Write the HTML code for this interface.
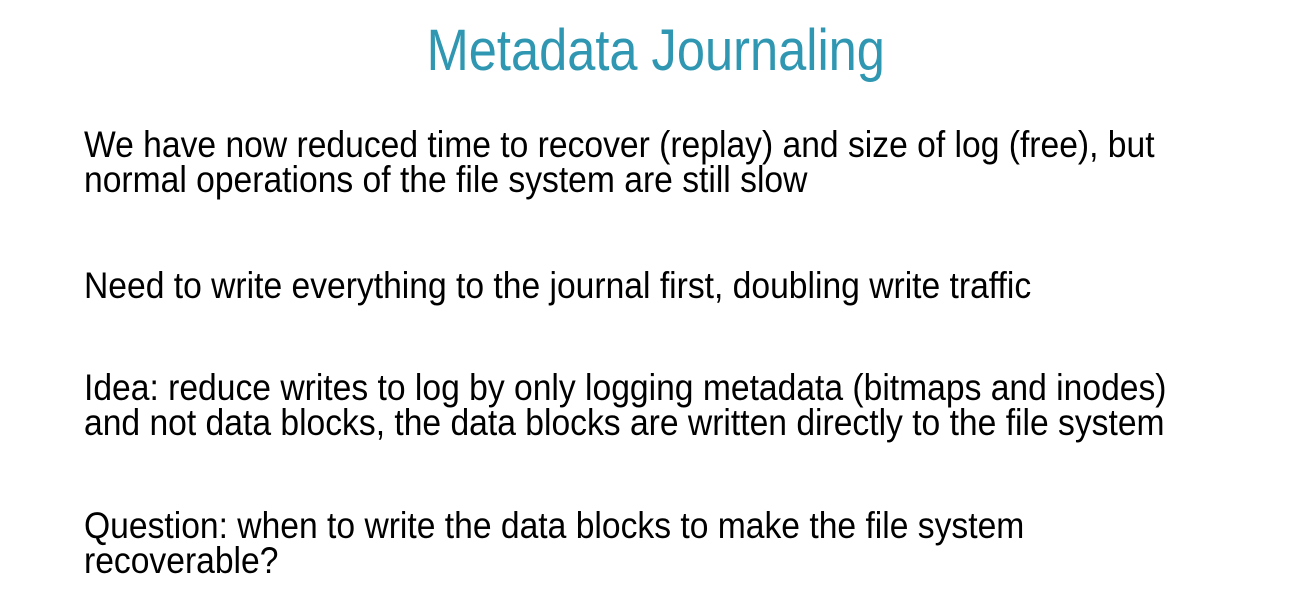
<!DOCTYPE html>
<html><head><style>
body{margin:0;width:1304px;height:596px;background:#fff;position:relative;overflow:hidden;font-family:"Liberation Sans",Arial,sans-serif;}
.t{position:absolute;left:4px;width:1304px;text-align:center;top:22px;font-size:58px;line-height:58px;color:#2f97b1;}
.t span{display:inline-block;transform:scaleX(0.872);}
.l{position:absolute;left:84px;font-size:37px;line-height:35px;color:#000;white-space:nowrap;transform:scaleX(0.909);transform-origin:0 0;}
</style></head><body>
<div class="t"><span>Metadata Journaling</span></div>
<div class="l" style="top:127px">We have now reduced time to recover (replay) and size of log (free), but</div>
<div class="l" style="top:162px">normal operations of the file system are still slow</div>
<div class="l" style="top:268px">Need to write everything to the journal first, doubling write traffic</div>
<div class="l" style="top:370px">Idea: reduce writes to log by only logging metadata (bitmaps and inodes)</div>
<div class="l" style="top:405px">and not data blocks, the data blocks are written directly to the file system</div>
<div class="l" style="top:508px">Question: when to write the data blocks to make the file system</div>
<div class="l" style="top:543px">recoverable?</div>
</body></html>
